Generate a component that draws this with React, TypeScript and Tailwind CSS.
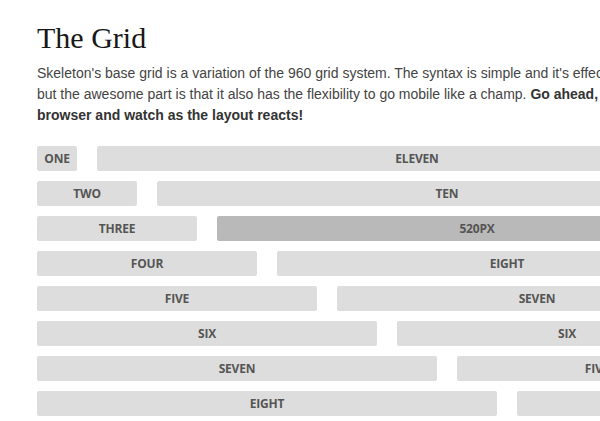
import React from 'react';

const rows: [string, number, string, number][] = [
  ['One', 1, 'Eleven', 11],
  ['Two', 2, 'Ten', 10],
  ['Three', 3, '520px', 9],
  ['Four', 4, 'Eight', 8],
  ['Five', 5, 'Seven', 7],
  ['Six', 6, 'Six', 6],
  ['Seven', 7, 'Five', 5],
  ['Eight', 8, 'Four', 4],
];

const Cell: React.FC<{ label: string; span: number; dark?: boolean }> = ({ label, span, dark }) => (
  <div
    className={`h-[25px] shrink-0 rounded-[2px] flex items-center justify-center text-[12px] font-bold uppercase tracking-[-0.2px] text-[#555] ${
      dark ? 'bg-[#b9b9b9] text-[#3a3a3a]' : 'bg-[#dddddd]'
    }`}
    style={{ width: span * 60 - 20 }}
  >
    {label}
  </div>
);

export default function App() {
  return (
    <div className="w-[600px] h-[421px] overflow-hidden bg-white">
      <div className="w-[960px] pl-[37px] pt-[20px]">
        <h1 className="text-[30px] leading-[36px] text-[#181818] font-['Liberation_Serif',Georgia,serif]">
          The Grid
        </h1>
        <p className="mt-[7px] text-[14px] leading-[21px] text-[#444] whitespace-nowrap font-['Liberation_Sans',Arial,sans-serif]">
          Skeleton's base grid is a variation of the 960 grid system. The syntax is simple and it's effective cross browser,
          <br />
          but the awesome part is that it also has the flexibility to go mobile like a champ. <strong className="text-[#333]">Go ahead, resize your</strong>
          <br />
          <strong className="text-[#333]">browser and watch as the layout reacts!</strong>
        </p>
        <div className="mt-[20px] flex flex-col gap-[10px] font-['Open_Sans',sans-serif]">
          {rows.map(([a, n, b, m], i) => (
            <div key={i} className="flex gap-5">
              <Cell label={a} span={n} />
              <Cell label={b} span={m} dark={b === '520px'} />
            </div>
          ))}
        </div>
      </div>
    </div>
  );
}
